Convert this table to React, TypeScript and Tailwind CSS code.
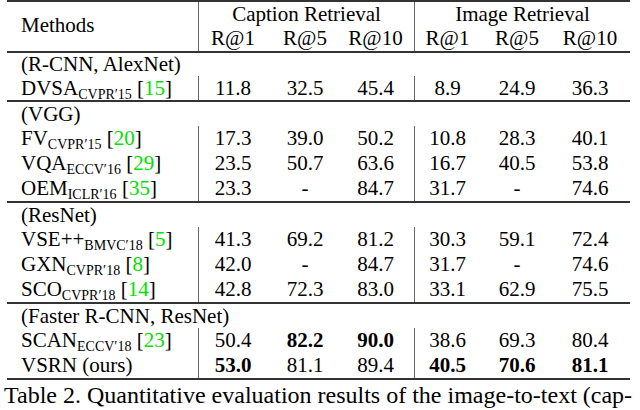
import React from "react";

type Cell = { v: string; b?: boolean };
type Row = { name: string; sub?: string; cite?: string; vals: Cell[] };
type Section = { group: string; first: boolean; rows: Row[] };

const c = (v: string, b = false): Cell => ({ v, b });

const sections: Section[] = [
  {
    group: "(R-CNN, AlexNet)",
    first: true,
    rows: [
      { name: "DVSA", sub: "CVPR′15", cite: "15", vals: [c("11.8"), c("32.5"), c("45.4"), c("8.9"), c("24.9"), c("36.3")] },
    ],
  },
  {
    group: "(VGG)",
    first: false,
    rows: [
      { name: "FV", sub: "CVPR′15", cite: "20", vals: [c("17.3"), c("39.0"), c("50.2"), c("10.8"), c("28.3"), c("40.1")] },
      { name: "VQA", sub: "ECCV′16", cite: "29", vals: [c("23.5"), c("50.7"), c("63.6"), c("16.7"), c("40.5"), c("53.8")] },
      { name: "OEM", sub: "ICLR′16", cite: "35", vals: [c("23.3"), c("-"), c("84.7"), c("31.7"), c("-"), c("74.6")] },
    ],
  },
  {
    group: "(ResNet)",
    first: false,
    rows: [
      { name: "VSE++", sub: "BMVC′18", cite: "5", vals: [c("41.3"), c("69.2"), c("81.2"), c("30.3"), c("59.1"), c("72.4")] },
      { name: "GXN", sub: "CVPR′18", cite: "8", vals: [c("42.0"), c("-"), c("84.7"), c("31.7"), c("-"), c("74.6")] },
      { name: "SCO", sub: "CVPR′18", cite: "14", vals: [c("42.8"), c("72.3"), c("83.0"), c("33.1"), c("62.9"), c("75.5")] },
    ],
  },
  {
    group: "(Faster R-CNN, ResNet)",
    first: false,
    rows: [
      { name: "SCAN", sub: "ECCV′18", cite: "23", vals: [c("50.4"), c("82.2", true), c("90.0", true), c("38.6"), c("69.3"), c("80.4")] },
      { name: "VSRN (ours)", vals: [c("53.0", true), c("81.1"), c("89.4"), c("40.5", true), c("70.6", true), c("81.1", true)] },
    ],
  },
];

// column widths: methods | caption R@1 R@5 R@10 | image R@1 R@5 R@10
const cols = "grid-cols-[192px_68px_76px_72px_65px_74px_76px]";
const cellCls = [
  "border-r border-[#666]",
  "",
  "",
  "border-r border-[#666] pr-[6px]",
  "",
  "",
  "pr-[4px]",
];

function Rule() {
  return <div className="h-[2px] bg-[#333]" />;
}

function DataRow({ row, short }: { row: Row; short: boolean }) {
  return (
    <div className={`grid ${cols} ${short ? "h-[24px] leading-[24px]" : "h-[25px] leading-[25px]"}`}>
      <div className="pl-[14px] whitespace-nowrap border-r border-[#666]">
        {row.name}
        {row.sub && <sub className="text-[14px]">{row.sub}</sub>}
        {row.cite && (
          <>
            {" "}[<span className="text-[#00e000]">{row.cite}</span>]
          </>
        )}
      </div>
      {row.vals.map((cell, i) => (
        <div key={i} className={`text-center ${cellCls[i + 1]} ${cell.b ? "font-bold" : ""}`}>
          {cell.v}
        </div>
      ))}
    </div>
  );
}

export default function App() {
  return (
    <div className="w-[640px] h-[410px] overflow-hidden bg-white text-black text-[21px] [font-family:'Liberation_Serif',serif]">
      <div className="ml-[7px] w-[623px]">
        <Rule />
        {/* header */}
        <div className={`grid ${cols} grid-rows-[24px_25px] leading-[24px]`}>
          <div className="row-span-2 flex items-center pl-[14px] pb-[4px] border-r border-[#666]">Methods</div>
          <div className="col-span-3 text-center border-r border-[#666]">Caption Retrieval</div>
          <div className="col-span-3 text-center">Image Retrieval</div>
          {["R@1", "R@5", "R@10", "R@1", "R@5", "R@10"].map((h, i) => (
            <div key={i} className={`text-center leading-[25px] ${cellCls[i + 1]}`}>
              {h}
            </div>
          ))}
        </div>
        <Rule />
        {sections.map((s) => (
          <div key={s.group}>
            <div className={`pl-[14px] ${s.first ? "h-[23px] leading-[23px]" : "h-[24px] leading-[24px]"}`}>
              {s.group}
            </div>
            {s.rows.map((r) => (
              <DataRow key={r.name} row={r} short={s.first} />
            ))}
            <Rule />
          </div>
        ))}
      </div>
      <div className="pl-[4px] whitespace-nowrap text-[24px] leading-[30px]">
        Table 2. Quantitative evaluation results of the image-to-text (cap-
      </div>
    </div>
  );
}
